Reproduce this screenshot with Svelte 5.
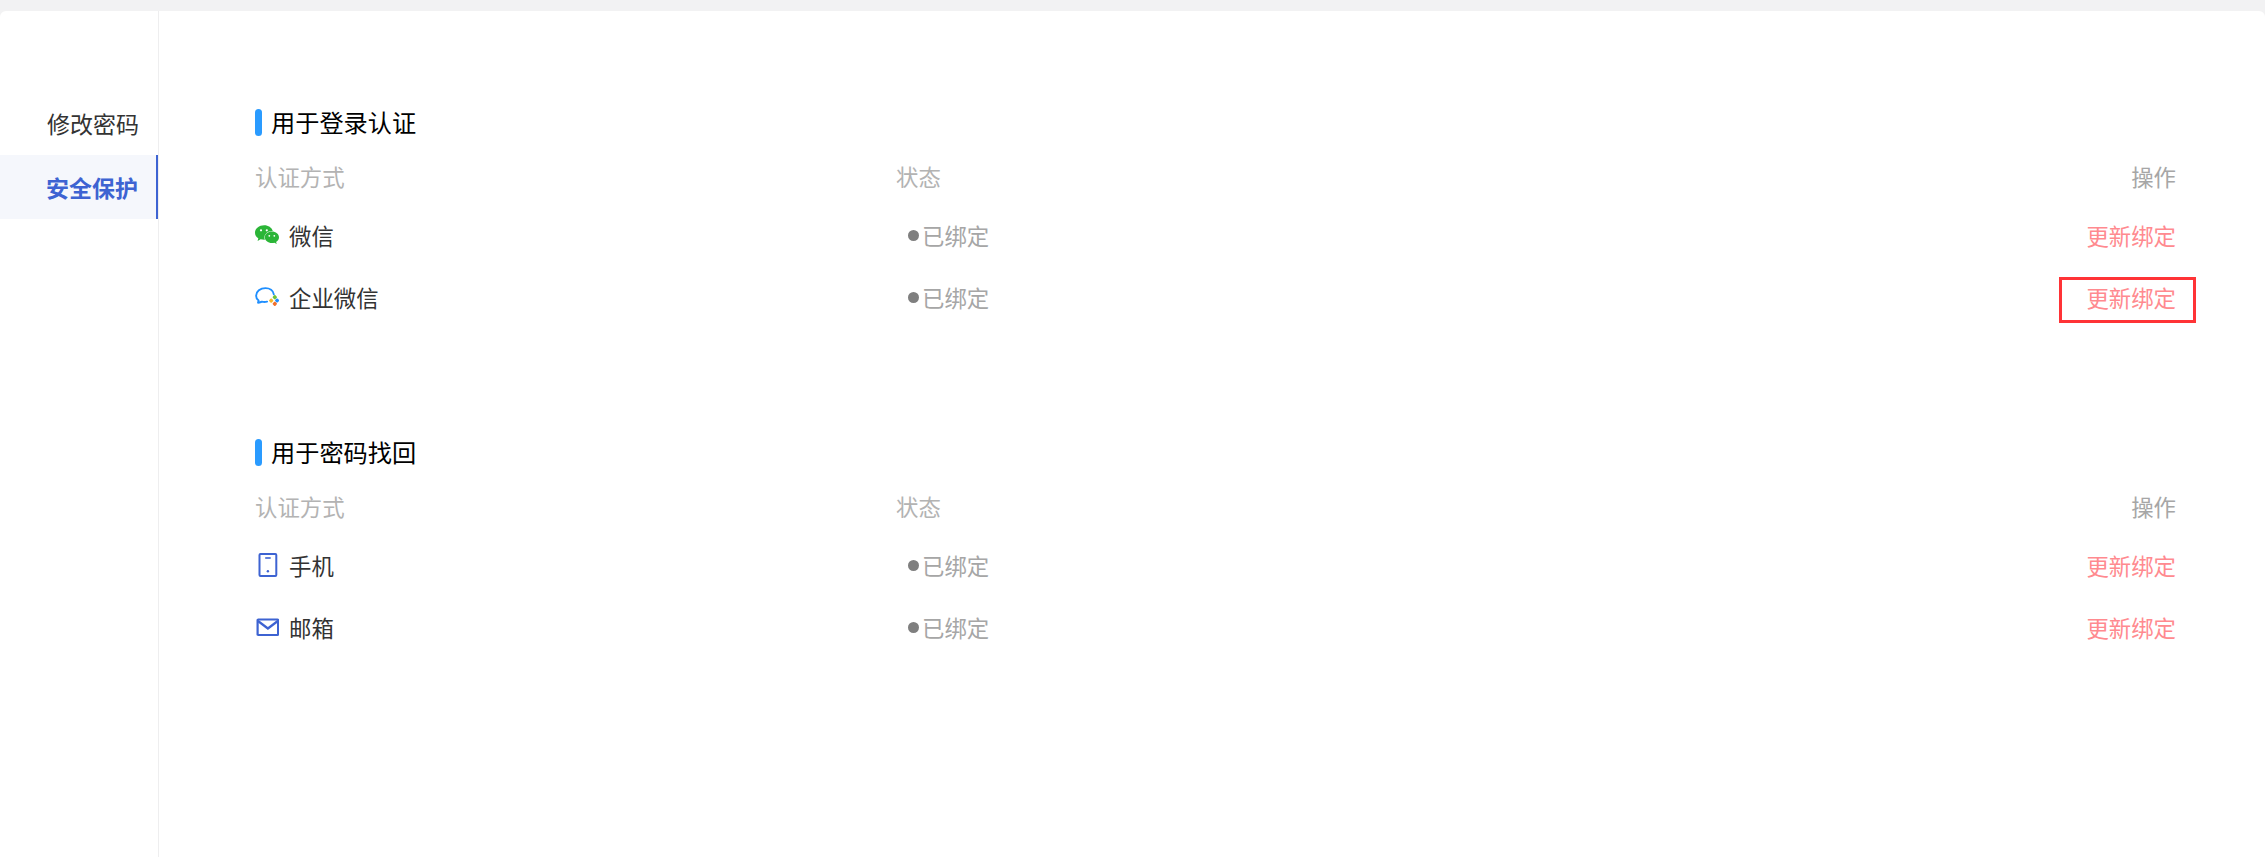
<script>
  const sections = [
    { title: '用于登录认证', rows: [
      { name: '微信', icon: 'wechat' },
      { name: '企业微信', icon: 'wecom', marked: true }
    ]},
    { title: '用于密码找回', rows: [
      { name: '手机', icon: 'phone' },
      { name: '邮箱', icon: 'mail' }
    ]}
  ];
</script>

<div class="page">
  <div class="card">
    <nav class="side">
      <div class="item">修改密码</div>
      <div class="item active">安全保护</div>
    </nav>
    <main class="main">
      {#each sections as s}
        <section class="section">
          <h2 class="title">{s.title}</h2>
          <div class="row head">
            <span>认证方式</span>
            <span>状态</span>
            <span class="op">操作</span>
          </div>
          {#each s.rows as r}
            <div class="row body">
              <span class="name">
                <span class="icon">
                  {#if r.icon === 'wechat'}
                    <svg viewBox="0 0 24 20" width="24" height="20">
                      <path fill="#2bb537" d="M9.200.3C4.100.3 0 3.600 0 7.700c0 2.300 1.300 4.300 3.300 5.600l-.7 2.600 3-1.600c1.100.3 2.300.5 3.600.5h.7c-.3-.7-.5-1.500-.5-2.300 0-3.700 3.500-6.600 7.800-6.600h.6C16.800 2.600 13.300.3 9.200.3z"/>
                      <path fill="#2bb537" d="M24 12.200c0-3.200-3.200-5.800-7.100-5.800s-7.100 2.600-7.100 5.800 3.200 5.800 7.100 5.800c.9 0 1.700-.1 2.500-.3l2.400 1.400-.7-2.100c1.800-1.100 2.900-2.900 2.900-4.800z"/>
                      <circle cx="6" cy="5.300" r="1.100" fill="#fff"/><circle cx="11.800" cy="5.300" r="1.100" fill="#fff"/>
                      <circle cx="14.300" cy="10.800" r=".9" fill="#fff"/><circle cx="19.300" cy="10.800" r=".9" fill="#fff"/>
                    </svg>
                  {:else if r.icon === 'wecom'}
                    <svg viewBox="0 0 24 20" width="24" height="20">
                      <path fill="none" stroke="#1f8fff" stroke-width="1.900" stroke-linecap="round" stroke-linejoin="round" d="M18.800 7.400C18.200 3.700 14.800 1.100 10.500 1.100 5.300 1.100 1.100 4.400 1.100 8.700c0 2 .9 3.700 2.500 4.900l-.6 2.100c1.500 0 2.900-.7 3.900-1 1.700.4 3.500.4 5.200-.1"/>
                      <rect x="18" y="8.400" width="3.600" height="3.600" rx="1" fill="#6fc23b" transform="rotate(45 19.800 10.200)"/>
                      <rect x="20.400" y="11.800" width="3.400" height="3.400" rx="1" fill="#1f8fff" transform="rotate(45 22.100 13.500)"/>
                      <rect x="18" y="15" width="3.600" height="3.600" rx="1" fill="#f0702c" transform="rotate(45 19.800 16.800)"/>
                      <rect x="14.400" y="11.800" width="3.600" height="3.600" rx="1" fill="#f5b82a" transform="rotate(45 16.200 13.600)"/>
                    </svg>
                  {:else if r.icon === 'phone'}
                    <svg viewBox="0 0 24 24" width="24" height="24">
                      <rect x="4.500" y="1" width="16.800" height="22" rx="1" fill="none" stroke="#3d63d2" stroke-width="2"/>
                      <rect x="10.200" y="4.200" width="5.500" height="1.600" fill="#3d63d2"/>
                      <circle cx="12.900" cy="18.300" r="1.200" fill="#3d63d2"/>
                    </svg>
                  {:else}
                    <svg viewBox="0 0 24 20" width="24" height="20">
                      <rect x="2.600" y="2.500" width="20.500" height="15.500" rx=".6" fill="none" stroke="#3d63d2" stroke-width="2.200"/>
                      <path d="M3 4l9.900 7.500L22.800 4" fill="none" stroke="#3d63d2" stroke-width="2.200"/>
                    </svg>
                  {/if}
                </span>
                {r.name}
              </span>
              <span class="status"><i class="dot"></i>已绑定</span>
              <a class="op link" class:marked={r.marked} href="#top">更新绑定</a>
            </div>
          {/each}
        </section>
      {/each}
    </main>
  </div>
</div>

<style>
  :global(body) {
    margin: 0;
    background: #fff;
    font-family: "Noto Sans CJK SC", "Noto Sans", sans-serif;
  }
  .page {
    height: 857px;
    padding-top: 11px;
    box-sizing: border-box;
    background: #f2f2f3;
    overflow: hidden;
  }
  .card {
    display: flex;
    height: 846px;
    background: #fff;
    border-radius: 6px 6px 0 0;
  }
  .side {
    width: 159px;
    flex: none;
    box-sizing: border-box;
    padding-top: 80px;
    border-right: 1px solid #eeeeef;
  }
  .item {
    height: 64px;
    box-sizing: border-box;
    padding-left: 47px;
    line-height: 64px;
    font-size: 23px;
    color: #333;
    white-space: nowrap;
  }
  .active {
    width: 158px;
    padding-left: 46px;
    background: #f5f7fc;
    border-right: 2px solid #3d63d2;
    color: #3d63d2;
    font-weight: 700;
  }
  .main {
    flex: 1;
    padding: 0 89px 0 96px;
  }
  .section {
    height: 330px;
    padding-top: 95px;
    box-sizing: border-box;
  }
  .title {
    display: flex;
    align-items: center;
    gap: 9px;
    height: 32px;
    margin: 0 0 22px;
    font-size: 24.200px;
    font-weight: 400;
    line-height: 32px;
    color: #000;
  }
  .title::before {
    content: "";
    width: 7px;
    height: 27px;
    margin-top: 1px;
    border-radius: 4px;
    background: #2a9bff;
  }
  .row {
    display: grid;
    grid-template-columns: 641px 1fr auto;
    align-items: center;
    font-size: 22.400px;
  }
  .head {
    height: 30px;
    margin-bottom: 14px;
    color: #b3b3b3;
  }
  .head .op { color: #a6a6a6; }
  .body {
    height: 62px;
    color: #333;
  }
  .name {
    display: flex;
    align-items: center;
    gap: 10px;
  }
  .icon {
    display: flex;
    justify-content: center;
    width: 24px;
  }
  .status {
    display: flex;
    align-items: center;
    gap: 3px;
    padding-left: 12px;
    color: #a6a6a6;
  }
  .dot {
    width: 11px;
    height: 11px;
    border-radius: 50%;
    background: #7f7f7f;
  }
  .link {
    position: relative;
    color: #ff8a8f;
    text-decoration: none;
  }
  .marked::after {
    content: "";
    position: absolute;
    left: -27px;
    right: -20px;
    top: -4px;
    bottom: -10px;
    border: 3px solid #ff3336;
  }
</style>
